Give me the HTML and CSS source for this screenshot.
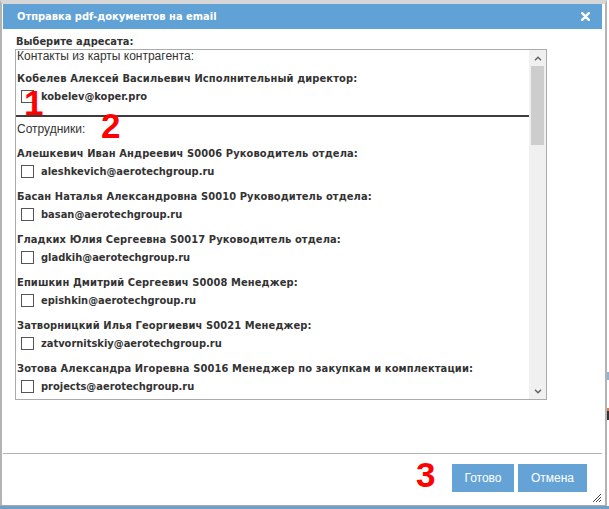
FILE: index.html
```html
<!DOCTYPE html>
<html lang="ru">
<head>
<meta charset="utf-8">
<title>Отправка pdf-документов на email</title>
<link rel="stylesheet" href="styles.css">
</head>
<body>
<div class="page">
  <div class="dialog">
    <div class="titlebar">
      <span class="title">Отправка pdf-документов на email</span>
      <svg class="close" width="9" height="9" viewBox="0 0 9 9"><path d="M1.2 1.2 L7.8 7.8 M7.8 1.2 L1.2 7.8" stroke="#fff" stroke-width="2.4" stroke-linecap="round"/></svg>
    </div>
    <div class="body">
      <div class="label">Выберите адресата:</div>
      <div class="listbox">
        <div class="list">
          <div class="section first">Контакты из карты контрагента:</div>
          <div class="contact">
            <div class="name">Кобелев Алексей Васильевич Исполнительный директор:</div>
            <div class="email"><span class="cb"></span>kobelev@koper.pro</div>
          </div>
          <div class="divider"></div>
          <div class="section">Сотрудники:</div>
          <div class="contact">
            <div class="name">Алешкевич Иван Андреевич S0006 Руководитель отдела:</div>
            <div class="email"><span class="cb"></span>aleshkevich@aerotechgroup.ru</div>
          </div>
          <div class="contact">
            <div class="name">Басан Наталья Александровна S0010 Руководитель отдела:</div>
            <div class="email"><span class="cb"></span>basan@aerotechgroup.ru</div>
          </div>
          <div class="contact">
            <div class="name">Гладких Юлия Сергеевна S0017 Руководитель отдела:</div>
            <div class="email"><span class="cb"></span>gladkih@aerotechgroup.ru</div>
          </div>
          <div class="contact">
            <div class="name">Епишкин Дмитрий Сергеевич S0008 Менеджер:</div>
            <div class="email"><span class="cb"></span>epishkin@aerotechgroup.ru</div>
          </div>
          <div class="contact">
            <div class="name">Затворницкий Илья Георгиевич S0021 Менеджер:</div>
            <div class="email"><span class="cb"></span>zatvornitskiy@aerotechgroup.ru</div>
          </div>
          <div class="contact">
            <div class="name">Зотова Александра Игоревна S0016 Менеджер по закупкам и комплектации:</div>
            <div class="email"><span class="cb"></span>projects@aerotechgroup.ru</div>
          </div>
        </div>
        <div class="scrollbar">
          <div class="sb-btn"><svg width="8" height="5" viewBox="0 0 8 5"><path d="M1 4.2 L4 1.2 L7 4.2" fill="none" stroke="#606060" stroke-width="1.4"/></svg></div>
          <div class="sb-thumb"></div>
          <div class="sb-track"></div>
          <div class="sb-btn"><svg width="8" height="5" viewBox="0 0 8 5"><path d="M1 0.8 L4 3.8 L7 0.8" fill="none" stroke="#606060" stroke-width="1.4"/></svg></div>
        </div>
      </div>
    </div>
    <div class="footer">
      <button class="btn btn-ok">Готово</button>
      <button class="btn btn-cancel">Отмена</button>
    </div>
    <svg class="grip" width="11" height="11" viewBox="0 0 11 11"><path d="M10 2 L2 10 M10 5 L5 10 M10 8 L8 10" stroke="#444" stroke-width="1"/></svg>
  </div>
  <div class="side">
    <div class="side-blue"></div>
    <div class="side-orange"></div>
    <div class="side-dark"></div>
  </div>
  <div class="bottom-strip"></div>
  <span class="mark m1">1</span>
  <span class="mark m2">2</span>
  <span class="mark m3">3</span>
</div>
</body>
</html>
```

FILE: styles.css
```css
html, body {
  margin: 0;
  padding: 0;
  background: #fff;
}

.page {
  position: relative;
  width: 609px;
  height: 509px;
  overflow: hidden;
  display: grid;
  grid-template-columns: 607px 2px;
  grid-template-rows: 506px 3px;
  font-family: "Liberation Sans", Arial, sans-serif;
  color: #333;
}

.dialog {
  position: relative;
  box-sizing: border-box;
  height: 506px;
  border-top: 4px solid #d6d6d6;
  border-left: 2px solid #b3b3b3;
  border-right: 2px solid #b3b3b3;
  border-bottom: 1px solid #a8a8a8;
  padding: 0 3px 3px 1px;
  display: flex;
  flex-direction: column;
  background: #fff;
}

.titlebar {
  height: 25px;
  flex: none;
  background: #60a1d6;
  display: flex;
  align-items: center;
  justify-content: space-between;
  padding: 0 12px 0 14px;
}

.title,
.label,
.name,
.email {
  font-family: "DejaVu Sans Condensed", "DejaVu Sans", Verdana, sans-serif;
  font-stretch: semi-condensed;
  font-weight: bold;
  font-size: 11px;
}

.title {
  color: #fff;
}

.close {
  display: block;
}

.body {
  flex: 1;
  padding: 6px 0 0 12px;
}

.label {
  line-height: 14px;
  padding-left: 1px;
}

.listbox {
  box-sizing: border-box;
  width: 532px;
  height: 351px;
  border: 1px solid #ababab;
  display: flex;
}

.list {
  flex: 1;
  overflow: hidden;
  padding-left: 1px;
}

.section {
  font-size: 12px;
  line-height: 16px;
}

.section.first {
  line-height: 13px;
}

.contact {
  margin-top: 7px;
}

.name {
  line-height: 17px;
  white-space: nowrap;
  letter-spacing: 0.12px;
}

.email {
  height: 18px;
  display: flex;
  align-items: center;
}

.cb {
  box-sizing: border-box;
  width: 13px;
  height: 13px;
  border: 1px solid #555;
  background: #fff;
  margin: 0 7px 0 4px;
  flex: none;
}

.divider {
  height: 2px;
  background: #3c3c3c;
  margin: 10px 0 4px -1px;
}

.divider + .section + .contact {
  margin-top: 8px;
}

.contact + .contact {
  margin-top: 8px;
}

.scrollbar {
  width: 17px;
  flex: none;
  background: #f0f0f0;
  display: flex;
  flex-direction: column;
}

.sb-btn {
  height: 16px;
  display: flex;
  align-items: center;
  justify-content: center;
}

.sb-thumb {
  height: 79px;
  margin: 0 2px;
  background: #cdcdcd;
}

.sb-track {
  flex: 1;
}

.footer {
  flex: none;
  border-top: 1px solid #b4b4b4;
  display: flex;
  justify-content: flex-end;
  gap: 4px;
  padding: 10px 15px 10px 0;
}

.btn {
  height: 28px;
  border: none;
  background: #65a3d7;
  color: #fff;
  font-family: "Liberation Sans", Arial, sans-serif;
  font-size: 12px;
  padding: 0;
  margin: 0;
}

.btn-ok {
  width: 62px;
}

.btn-cancel {
  width: 69px;
}

.grip {
  position: absolute;
  right: 3px;
  bottom: 2px;
}

.side {
  position: relative;
  background: #fff;
}

.side-blue {
  position: absolute;
  top: 372px;
  left: 0;
  width: 2px;
  height: 8px;
  background: #8fb3d4;
}

.side-orange {
  position: absolute;
  top: 408px;
  left: 0;
  width: 2px;
  height: 3px;
  background: #e07b4a;
}

.side-dark {
  position: absolute;
  top: 411px;
  left: 0;
  width: 2px;
  height: 9px;
  background: #333;
}

.bottom-strip {
  grid-column: 1 / span 2;
  background: #6f9fc6;
}

.mark {
  position: absolute;
  font-family: "Liberation Sans", Arial, sans-serif;
  font-weight: bold;
  font-size: 35px;
  line-height: 1;
  color: #f00;
}

.m1 {
  left: 24px;
  top: 85px;
}

.m2 {
  left: 101px;
  top: 108px;
}

.m3 {
  left: 416px;
  top: 457px;
}
```
